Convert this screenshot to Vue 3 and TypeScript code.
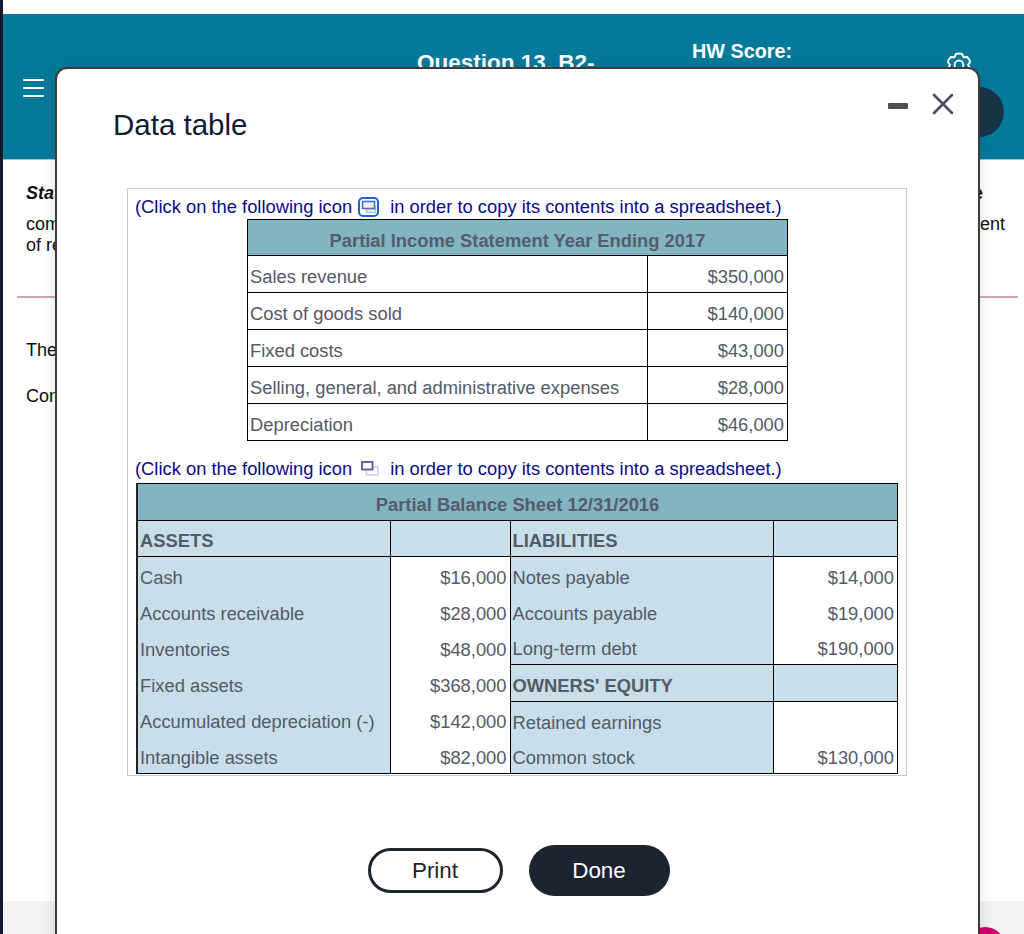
<script setup lang="ts">
interface IncomeRow { label: string; value: string }
interface BalanceRow {
  asset: string
  assetValue: string
  claim: string
  claimValue: string
  bold?: boolean
  ruled?: boolean
}

const incomeRows: IncomeRow[] = [
  { label: 'Sales revenue', value: '$350,000' },
  { label: 'Cost of goods sold', value: '$140,000' },
  { label: 'Fixed costs', value: '$43,000' },
  { label: 'Selling, general, and administrative expenses', value: '$28,000' },
  { label: 'Depreciation', value: '$46,000' },
]

const balanceRows: BalanceRow[] = [
  { asset: 'Cash', assetValue: '$16,000', claim: 'Notes payable', claimValue: '$14,000' },
  { asset: 'Accounts receivable', assetValue: '$28,000', claim: 'Accounts payable', claimValue: '$19,000' },
  { asset: 'Inventories', assetValue: '$48,000', claim: 'Long-term debt', claimValue: '$190,000' },
  { asset: 'Fixed assets', assetValue: '$368,000', claim: "OWNERS' EQUITY", claimValue: '', bold: true, ruled: true },
  { asset: 'Accumulated depreciation (-)', assetValue: '$142,000', claim: 'Retained earnings', claimValue: '', ruled: true },
  { asset: 'Intangible assets', assetValue: '$82,000', claim: 'Common stock', claimValue: '$130,000' },
]
</script>

<template>
  <div class="page">
    <header class="topbar">
      <div class="burger"><i></i><i></i><i></i></div>
      <div class="question">Question 13, B2-</div>
      <div class="score">HW Score:</div>
      <svg class="gear" width="24" height="24" viewBox="0 0 24 24" fill="none" stroke="#fff" stroke-width="2" stroke-linejoin="round">
        <path d="M9 .9A11.5 11.5 0 0 1 15 .9L16.5 4.2L20.1 3.9A11.5 11.5 0 0 1 23.1 9L21 12L23.1 15A11.5 11.5 0 0 1 20.1 20.1L16.5 19.8L15 23.1A11.5 11.5 0 0 1 9 23.1L7.5 19.8L3.9 20.1A11.5 11.5 0 0 1 .9 15L3 12L.9 9A11.5 11.5 0 0 1 3.9 3.9L7.5 4.2Z" />
        <circle cx="12" cy="12" r="4.4" />
      </svg>
      <div class="avatar"></div>
    </header>

    <main class="behind">
      <div class="line first"><b>Stat</b><b class="tail">e</b></div>
      <div class="line second"><span>comp</span><span>ent</span></div>
      <div class="line"><span>of re</span></div>
      <div class="rule"></div>
      <div class="line after"><span>The</span></div>
      <div class="line next"><span>Cons</span></div>
    </main>

    <footer class="band"><div class="help"></div></footer>

    <section class="modal">
      <div class="modal-head">
        <h1>Data table</h1>
        <div class="controls">
          <span class="minimize"></span>
          <svg class="close" width="22" height="22" viewBox="0 0 22 22" fill="none" stroke="#46525f" stroke-width="2.6" stroke-linecap="round">
            <path d="M2 2L20 20M20 2L2 20" />
          </svg>
        </div>
      </div>

      <div class="sheet">
        <p class="hint">
          <span>(Click on the following icon</span>
          <svg class="copy-on" width="21" height="20" viewBox="0 0 21 20" fill="none">
            <rect x="1" y="1" width="19" height="18" rx="4" fill="#fff" stroke="#1767d2" stroke-width="2" />
            <rect x="8.5" y="9.5" width="9" height="6" fill="#e3e8f6" stroke="#b3bfe2" stroke-width="1.3" />
            <rect x="4.5" y="4.5" width="12" height="7" fill="#eef1fa" stroke="#5a6db8" stroke-width="1.6" />
          </svg>
          <span>in order to copy its contents into a spreadsheet.)</span>
        </p>
        <table class="income">
          <colgroup><col class="i-a" /><col /></colgroup>
          <thead><tr><th colspan="2">Partial Income Statement Year Ending 2017</th></tr></thead>
          <tbody>
            <tr v-for="row in incomeRows" :key="row.label">
              <td>{{ row.label }}</td>
              <td class="num">{{ row.value }}</td>
            </tr>
          </tbody>
        </table>

        <p class="hint second-hint">
          <span>(Click on the following icon</span>
          <svg class="copy-off" width="18" height="15" viewBox="0 0 18 15" fill="none">
            <rect x="5.5" y="6" width="11.5" height="8" stroke="#c6cbe6" stroke-width="1.4" />
            <rect x="1" y="1" width="10.5" height="7.5" fill="#fff" stroke="#4c5ba6" stroke-width="1.8" />
          </svg>
          <span>in order to copy its contents into a spreadsheet.)</span>
        </p>
        <table class="balance">
          <colgroup><col class="b-a" /><col class="b-b" /><col class="b-c" /><col /></colgroup>
          <thead>
            <tr><th colspan="4">Partial Balance Sheet 12/31/2016</th></tr>
            <tr class="subhead">
              <td><b>ASSETS</b></td>
              <td></td>
              <td><b>LIABILITIES</b></td>
              <td></td>
            </tr>
          </thead>
          <tbody>
            <tr v-for="row in balanceRows" :key="row.asset">
              <td class="tint">{{ row.asset }}</td>
              <td class="num">{{ row.assetValue }}</td>
              <td class="tint" :class="{ ruled: row.ruled }">
                <b v-if="row.bold">{{ row.claim }}</b>
                <template v-else>{{ row.claim }}</template>
              </td>
              <td class="num" :class="{ ruled: row.ruled, tint: row.bold }">{{ row.claimValue }}</td>
            </tr>
          </tbody>
        </table>
      </div>

      <div class="actions">
        <button class="print" type="button">Print</button>
        <button class="done" type="button">Done</button>
      </div>
    </section>
  </div>
</template>

<style scoped>
.page {
  position: relative;
  box-sizing: border-box;
  width: 1024px;
  height: 934px;
  overflow: hidden;
  display: flex;
  flex-direction: column;
  padding-top: 14px;
  border-left: 3px solid #0f1b2b;
  background: #fff;
  font-family: "Liberation Sans", Arial, sans-serif;
}
.topbar {
  box-sizing: border-box;
  flex: none;
  height: 146px;
  display: flex;
  align-items: flex-start;
  background: #047a9b;
  border-bottom: 1px solid #9fc3d2;
  color: #fff;
}
.burger {
  margin: 65px 0 0 20px;
  width: 21px;
  display: flex;
  flex-direction: column;
  gap: 6px;
}
.burger i {
  display: block;
  height: 2px;
  background: #fff;
  border-radius: 1px;
}
.question {
  margin: 36px 0 0 373px;
  width: 178px;
  font-size: 22.5px;
  line-height: 26px;
  font-weight: 700;
  white-space: nowrap;
}
.score {
  margin: 25px 0 0 97px;
  width: 100px;
  font-size: 19.8px;
  line-height: 24px;
  font-weight: 700;
  white-space: nowrap;
}
.gear {
  margin: 39px 0 0 155px;
  flex: none;
  overflow: visible;
}
.avatar {
  margin: 73px 0 0 -17px;
  flex: none;
  width: 50px;
  height: 50px;
  border-radius: 50%;
  background: #173545;
}
.behind {
  flex: 1;
  padding-top: 23px;
  font-size: 18px;
  line-height: 21px;
  color: #111;
}
.line {
  display: flex;
  justify-content: space-between;
  padding: 0 19px 0 23px;
}
.first b:first-child {
  font-style: italic;
}
.tail {
  margin-right: 22px;
}
.second {
  margin-top: 10px;
}
.rule {
  height: 2px;
  margin: 40px 6px 0 14px;
  background: #c9a9b6;
}
.after {
  margin-top: 42px;
}
.next {
  margin-top: 25px;
}
.band {
  flex: none;
  height: 33px;
  overflow: hidden;
  display: flex;
  justify-content: flex-end;
  padding-right: 19px;
  background: #f2f2f2;
}
.help {
  width: 40px;
  height: 40px;
  margin-top: 26px;
  border-radius: 50%;
  background: #d1006f;
}
.modal {
  position: absolute;
  left: 52px;
  top: 67px;
  box-sizing: border-box;
  width: 925px;
  height: 900px;
  background: #fff;
  border: 2px solid #3c3c3c;
  border-radius: 12px;
  box-shadow: 0 0 14px rgba(0, 0, 0, 0.12);
}
.modal-head {
  display: flex;
  justify-content: space-between;
  align-items: flex-start;
  padding: 24px 24px 0 56px;
}
.modal-head h1 {
  margin: 15px 0 0;
  font-size: 29.5px;
  line-height: 34px;
  font-weight: 400;
  color: #0d1b33;
}
.controls {
  display: flex;
  align-items: center;
  gap: 24px;
}
.minimize {
  width: 20px;
  height: 6px;
  margin-top: 3px;
  border-radius: 1px;
  background: #4f4f4f;
}
.close {
  display: block;
}
.sheet {
  box-sizing: border-box;
  width: 780px;
  margin: 46px 0 0 70px;
  border: 1.5px solid #c8c8c8;
  padding-bottom: 1px;
  font-size: 18.35px;
  line-height: 21px;
  color: #535a68;
}
.hint {
  display: flex;
  align-items: center;
  margin: 7px 0 0 7px;
  height: 21px;
  color: #0b0b8a;
  white-space: nowrap;
}
.copy-on {
  flex: none;
  margin: 0 11px 0 6px;
}
.copy-off {
  flex: none;
  margin: 0 11px 0 9px;
}
.second-hint {
  margin-top: 17px;
}
table {
  border-collapse: collapse;
  table-layout: fixed;
}
th {
  height: 30px;
  padding: 5px 0 0;
  background: #82b4c2;
  font-weight: 700;
  color: #565c6b;
  border-bottom: 1px solid #000;
}
td {
  height: 31px;
  padding: 5px 3px 0 2px;
  border-left: 1px solid #000;
  border-right: 1px solid #000;
}
.num {
  text-align: right;
}
.income {
  width: 541px;
  margin: 2px 0 0 119px;
  border: 1px solid #000;
}
.income td {
  border: 1px solid #000;
}
.i-a {
  width: 400px;
}
.balance {
  width: 762px;
  margin: 4px 0 0 8px;
  border: 1px solid #000;
  border-left: 2px solid #222;
}
.balance th {
  height: 30.5px;
}
.balance td {
  height: 30.67px;
}
.b-a {
  width: 253px;
}
.b-b {
  width: 120px;
}
.b-c {
  width: 263px;
}
.subhead td {
  background: #c8dee9;
  border-bottom: 1px solid #000;
}
.tint {
  background: #c8dee9;
}
.ruled {
  border-top: 1px solid #000;
}
.actions {
  display: flex;
  justify-content: center;
  align-items: center;
  gap: 26px;
  margin: 69px 0 0 2px;
}
.actions button {
  padding: 0;
  font-family: inherit;
  font-size: 22.4px;
}
.print {
  width: 135px;
  height: 45px;
  border: 3px solid #1d2532;
  border-radius: 23px;
  background: #fff;
  color: #1c2431;
}
.done {
  width: 141px;
  height: 51px;
  border: 0;
  border-radius: 26px;
  background: #1c2431;
  color: #fff;
}
</style>

<style>
html, body { margin: 0; padding: 0; background: #fff; }
</style>
